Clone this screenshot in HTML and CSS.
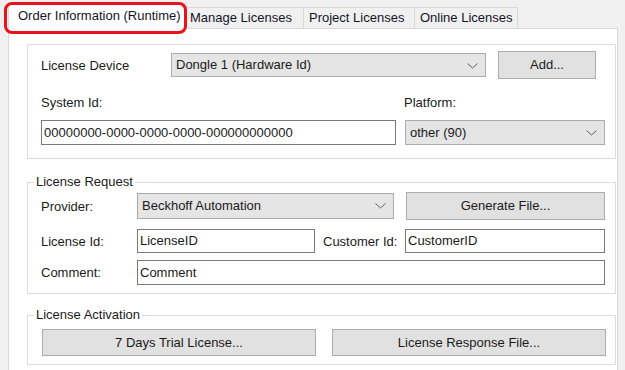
FILE: index.html
```html
<!DOCTYPE html>
<html>
<head>
<meta charset="utf-8">
<link rel="stylesheet" href="styles.css">
</head>
<body>
<div class="window">
  <div class="tabs">
    <div class="tab active">Order Information (Runtime)<span class="highlight"></span></div>
    <div class="tab">Manage Licenses</div>
    <div class="tab">Project Licenses</div>
    <div class="tab">Online Licenses</div>
  </div>
  <div class="panel">
    <div class="group g1">
      <div class="row r1">
        <span class="label w130">License Device</span>
        <div class="combo w317">Dongle 1 (Hardware Id)<svg class="chev" width="11" height="6" viewBox="0 0 11 6"><polyline points="0.5,0.5 5.5,5 10.5,0.5" fill="none" stroke="#606060" stroke-width="1"/></svg></div>
        <div class="button add">Add...</div>
      </div>
      <div class="row r2">
        <span class="label w363">System Id:</span>
        <span class="label">Platform:</span>
      </div>
      <div class="row r3">
        <div class="input w354">00000000-0000-0000-0000-000000000000</div>
        <div class="combo w200 platform">other (90)<svg class="chev" width="11" height="6" viewBox="0 0 11 6"><polyline points="0.5,0.5 5.5,5 10.5,0.5" fill="none" stroke="#606060" stroke-width="1"/></svg></div>
      </div>
    </div>
    <fieldset class="group g2">
      <legend>License Request</legend>
      <div class="row q1">
        <span class="label w96">Provider:</span>
        <div class="combo w257 prov">Beckhoff Automation<svg class="chev" width="11" height="6" viewBox="0 0 11 6"><polyline points="0.5,0.5 5.5,5 10.5,0.5" fill="none" stroke="#606060" stroke-width="1"/></svg></div>
        <div class="button gen">Generate File...</div>
      </div>
      <div class="row q2">
        <span class="label w96">License Id:</span>
        <div class="input w178">LicenseID</div>
        <span class="label cust">Customer Id:</span>
        <div class="input w200">CustomerID</div>
      </div>
      <div class="row q3">
        <span class="label w96">Comment:</span>
        <div class="input w468">Comment</div>
      </div>
    </fieldset>
    <fieldset class="group g3">
      <legend>License Activation</legend>
      <div class="row a1">
        <div class="button big">7 Days Trial License...</div>
        <div class="button big second">License Response File...</div>
      </div>
    </fieldset>
  </div>
</div>
</body>
</html>
```
FILE: styles.css
```css
* { box-sizing: border-box; }
html, body {
  margin: 0;
  padding: 0;
  background: #f0f0f0;
  font-family: "Liberation Sans", Arial, sans-serif;
  font-size: 13px;
  color: #1a1a1a;
  overflow: hidden;
}
.window {
  width: 625px;
  height: 370px;
  padding-left: 8px;
}
.tabs {
  display: flex;
  align-items: flex-end;
  height: 28px;
  position: relative;
  z-index: 2;
}
.tab {
  height: 21px;
  line-height: 19px;
  padding: 0 5px 0 4px;
  border: 1px solid #d9d9d9;
  border-bottom: none;
  border-left: none;
  background: #f0f0f0;
  white-space: nowrap;
  color: #141428;
}
.tab.active {
  position: relative;
  height: 26px;
  line-height: 24px;
  margin-bottom: -1px;
  padding: 0 8px 0 9px;
  border-left: 1px solid #d9d9d9;
  background: #ffffff;
  width: 179px;
}
.tab:nth-child(2) { width: 117px; padding-left: 3px; }
.tab:nth-child(3) { width: 111px; padding-left: 5px; }
.tab:nth-child(4) { width: 103px; padding-left: 5px; }
.highlight {
  position: absolute;
  left: -5px;
  top: -2px;
  width: 183px;
  height: 32px;
  border: 3px solid #e8141b;
  border-radius: 8px;
  pointer-events: none;
}
.panel {
  width: 610px;
  height: 350px;
  background: #ffffff;
  border: 1px solid #d9d9d9;
  padding: 15px 2px 0 18px;
}
.group {
  border: 1px solid #dcdcdc;
  margin: 0;
  min-width: 0;
  width: 589px;
}
.g1 {
  padding: 6px 0 13px 13px;
}
fieldset.group {
  padding: 2px 0 8px 13px;
}
fieldset.group legend {
  padding: 0 2px;
  margin-left: -7px;
  line-height: 16px;
  height: 16px;
}
.g2 { margin-top: 15px; }
.g3 { margin-top: 13px; padding-bottom: 13px; }
.row {
  display: flex;
  align-items: center;
}
.label { white-space: nowrap; display: inline-block; }
.w96 { width: 96px; }
.w130 { width: 130px; }
.w363 { width: 363px; }
.w317 { width: 315px; }
.w354 { width: 355px; }
.w200 { width: 200px; }
.w257 { width: 257px; }
.w178 { width: 178px; }
.w468 { width: 468px; }
.r1 { height: 28px; }
.r2 { height: 14px; margin-top: 16px; margin-bottom: 11px; }
.r3 { height: 25px; }
.q1 { height: 28px; }
.q2 { height: 24px; margin-top: 9px; }
.q3 { height: 25px; margin-top: 7px; }
.a1 { height: 27px; margin-top: 4px; }
.combo {
  position: relative;
  height: 24px;
  line-height: 22px;
  background: #e5e5e5;
  border: 1px solid #acacac;
  padding-left: 4px;
  white-space: nowrap;
}
.combo .chev {
  position: absolute;
  right: 7px;
  top: 9px;
}
.platform { margin-left: 9px; height: 25px; line-height: 23px; }
.prov { height: 26px; line-height: 24px; }
.input {
  height: 25px;
  line-height: 23px;
  background: #ffffff;
  border: 1px solid #7a7a7a;
  padding-left: 2px;
  white-space: nowrap;
}
.q2 .input { height: 24px; line-height: 22px; }
.button {
  height: 28px;
  line-height: 26px;
  background: #e1e1e1;
  border: 1px solid #adadad;
  text-align: center;
  white-space: nowrap;
}
.add { width: 98px; margin-left: 12px; }
.gen { width: 199px; margin-left: 12px; }
.cust { margin-left: 8px; width: 82px; }
.big { width: 274px; height: 27px; line-height: 25px; margin-left: 1px; }
.second { margin-left: 16px; }
```
